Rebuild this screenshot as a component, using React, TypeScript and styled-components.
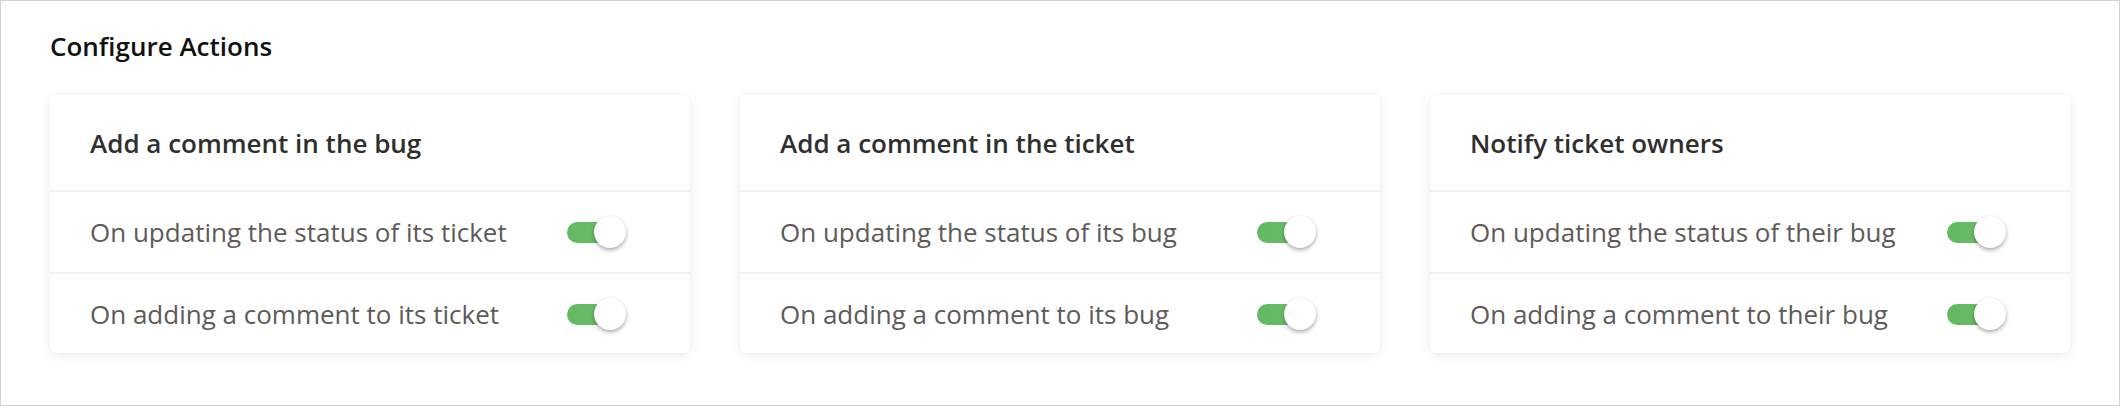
import React, { useState } from 'react';
import styled, { createGlobalStyle } from 'styled-components';

const GlobalStyle = createGlobalStyle`
  html, body {
    margin: 0;
    padding: 0;
    background: #fff;
  }
  body {
    font-family: "Open Sans", Lato, Arial, sans-serif;
  }
`;

type Rule = { id: string; label: string; on: boolean };
type Group = { id: string; title: string; rules: Rule[] };

const initialGroups: Group[] = [
  {
    id: 'bug',
    title: 'Add a comment in the bug',
    rules: [
      { id: 'bug-status', label: 'On updating the status of its ticket', on: true },
      { id: 'bug-comment', label: 'On adding a comment to its ticket', on: true }
    ]
  },
  {
    id: 'ticket',
    title: 'Add a comment in the ticket',
    rules: [
      { id: 'ticket-status', label: 'On updating the status of its bug', on: true },
      { id: 'ticket-comment', label: 'On adding a comment to its bug', on: true }
    ]
  },
  {
    id: 'notify',
    title: 'Notify ticket owners',
    rules: [
      { id: 'notify-status', label: 'On updating the status of their bug', on: true },
      { id: 'notify-comment', label: 'On adding a comment to their bug', on: true }
    ]
  }
];

const App: React.FC = () => {
  const [groups, setGroups] = useState(initialGroups);

  const toggle = (groupId: string, ruleId: string) => {
    setGroups(groups.map((g) =>
      g.id !== groupId ? g : {
        ...g,
        rules: g.rules.map((r) => (r.id === ruleId ? { ...r, on: !r.on } : r))
      }
    ));
  };

  return (
    <>
      <GlobalStyle />
      <Page>
        <Title>Configure Actions</Title>
        <Cards>
          {groups.map((group) => (
            <Card key={group.id}>
              <CardHeader>{group.title}</CardHeader>
              {group.rules.map((rule) => (
                <Row key={rule.id}>
                  <RowLabel>{rule.label}</RowLabel>
                  <Switch
                    type='button'
                    role='switch'
                    aria-checked={rule.on}
                    aria-label={rule.label}
                    onClick={() => toggle(group.id, rule.id)}
                  >
                    <Track $on={rule.on} />
                    <Knob $on={rule.on} />
                  </Switch>
                </Row>
              ))}
            </Card>
          ))}
        </Cards>
      </Page>
    </>
  );
};

export default App;

const Page = styled.div`
  box-sizing: border-box;
  width: 100%;
  height: 406px;
  border: 1px solid #d3d3d3;
  padding: 26px 49px 0;
`;

const Title = styled.h1`
  margin: 0;
  font-size: 26px;
  line-height: 38px;
  font-weight: 600;
  color: #111;
`;

const Cards = styled.div`
  display: grid;
  grid-template-columns: repeat(3, 1fr);
  gap: 50px;
  margin-top: 30px;
`;

const Card = styled.div`
  background: #fff;
  border-radius: 6px;
  box-shadow: 0 2px 14px rgba(0, 0, 0, 0.07), 0 1px 3px rgba(0, 0, 0, 0.03);
  overflow: hidden;
`;

const CardHeader = styled.div`
  height: 95px;
  display: flex;
  align-items: center;
  padding: 0 40px;
  font-size: 26px;
  font-weight: 600;
  color: #2f2f2f;
`;

const Row = styled.div`
  height: 80px;
  display: flex;
  align-items: center;
  justify-content: space-between;
  padding: 0 64px 0 40px;
  border-top: 2px solid #f1f1f1;
  &:last-child {
    height: 79px;
  }
`;

const RowLabel = styled.span`
  font-size: 26px;
  color: #5f5a5a;
`;

const Switch = styled.button`
  position: relative;
  width: 59px;
  height: 32px;
  padding: 0;
  border: none;
  background: none;
  cursor: pointer;
  flex-shrink: 0;
`;

const Track = styled.span<{ $on: boolean }>`
  position: absolute;
  left: 0;
  top: 6px;
  width: 52px;
  height: 21px;
  border-radius: 11px;
  background: ${(p) => (p.$on ? 'linear-gradient(90deg, #63b862, #6cbf6b)' : '#cfcfcf')};
`;

const Knob = styled.span<{ $on: boolean }>`
  position: absolute;
  top: 0;
  left: ${(p) => (p.$on ? '27px' : '0')};
  width: 32px;
  height: 32px;
  border-radius: 50%;
  background: #fff;
  box-shadow: 0 2px 4px rgba(0, 0, 0, 0.35);
`;
